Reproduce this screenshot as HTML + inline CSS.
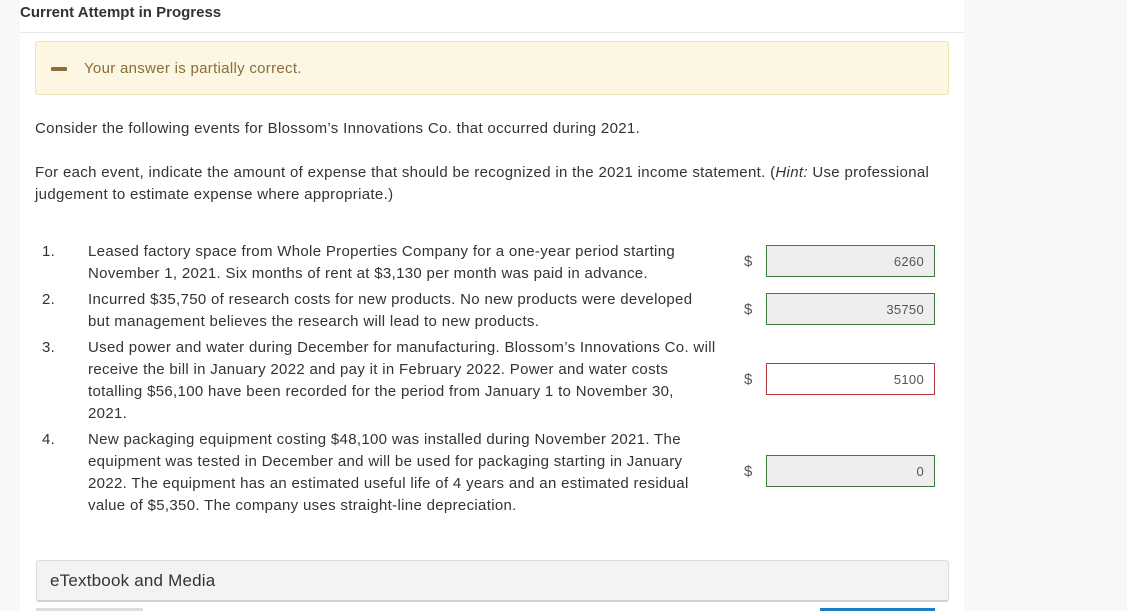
<!DOCTYPE html>
<html><head><meta charset="utf-8"><style>
body{margin:0;width:1127px;height:611px;background:#f8f8f8;font-family:"Liberation Sans",sans-serif;color:#333;position:relative;overflow:hidden}
.panel{position:absolute;left:20px;top:0;width:944px;height:611px;background:#fff}
.a{position:absolute;white-space:nowrap}
.t{font-size:15px;line-height:22px;color:#333;letter-spacing:0.32px}
.box{position:absolute;left:766px;width:167px;height:30px;border:1px solid #3f7a3f;background:#eee;font-size:13px;color:#555;text-align:right;box-sizing:content-box;line-height:32px;letter-spacing:0.3px}
.box span{padding-right:10px}
.d{position:absolute;left:744px;font-size:15px;color:#555}
</style></head><body>
<div class="panel"></div>
<div class="a" style="left:20px;top:4px;font-size:15px;font-weight:bold;color:#333">Current Attempt in Progress</div>
<div style="position:absolute;left:20px;top:32px;width:944px;height:1px;background:#e8e8e8"></div>
<div style="position:absolute;left:35px;top:41px;width:912px;height:52px;background:#fcf6e3;border:1px solid #f1e4b8;border-radius:3px"></div>
<div style="position:absolute;left:51px;top:67px;width:16px;height:4px;background:#8a6d3b;border-radius:1px"></div>
<div class="a" style="left:84px;top:58px;font-size:15px;line-height:22px;color:#8a6d3b;letter-spacing:0.3px">Your answer is partially correct.</div>
<div class="a t" style="left:35px;top:118px">Consider the following events for Blossom’s Innovations Co. that occurred during 2021.</div>
<div class="a t" style="left:35px;top:162px">For each event, indicate the amount of expense that should be recognized in the 2021 income statement. (<i>Hint:</i> Use professional<br>judgement to estimate expense where appropriate.)</div>
<div class="a t" style="left:42px;top:241px">1.</div>
<div class="a t" style="left:88px;top:241px">Leased factory space from Whole Properties Company for a one-year period starting<br>November 1, 2021. Six months of rent at $3,130 per month was paid in advance.</div>
<div class="a t" style="left:42px;top:289px">2.</div>
<div class="a t" style="left:88px;top:289px">Incurred $35,750 of research costs for new products. No new products were developed<br>but management believes the research will lead to new products.</div>
<div class="a t" style="left:42px;top:337px">3.</div>
<div class="a t" style="left:88px;top:337px">Used power and water during December for manufacturing. Blossom’s Innovations Co. will<br>receive the bill in January 2022 and pay it in February 2022. Power and water costs<br>totalling $56,100 have been recorded for the period from January 1 to November 30,<br>2021.</div>
<div class="a t" style="left:42px;top:429px">4.</div>
<div class="a t" style="left:88px;top:429px">New packaging equipment costing $48,100 was installed during November 2021. The<br>equipment was tested in December and will be used for packaging starting in January<br>2022. The equipment has an estimated useful life of 4 years and an estimated residual<br>value of $5,350. The company uses straight-line depreciation.</div>
<div class="d" style="top:253px">$</div><div class="box" style="top:245px"><span>6260</span></div>
<div class="d" style="top:301px">$</div><div class="box" style="top:293px"><span>35750</span></div>
<div class="d" style="top:371px">$</div><div class="box" style="top:363px;background:#fff;border-color:#b33a3a"><span>5100</span></div>
<div class="d" style="top:463px">$</div><div class="box" style="top:455px"><span>0</span></div>
<div style="position:absolute;left:36px;top:560px;width:911px;height:39px;background:#f3f3f3;border:1px solid #ddd;border-bottom:2px solid #d0d0d0;border-radius:3px"></div>
<div class="a" style="left:50px;top:570px;font-size:17px;line-height:22px;color:#333;letter-spacing:0.2px">eTextbook and Media</div>
<div style="position:absolute;left:36px;top:608px;width:107px;height:3px;background:#ddd"></div>
<div style="position:absolute;left:820px;top:608px;width:115px;height:3px;background:#1b7fc4"></div>
</body></html>
